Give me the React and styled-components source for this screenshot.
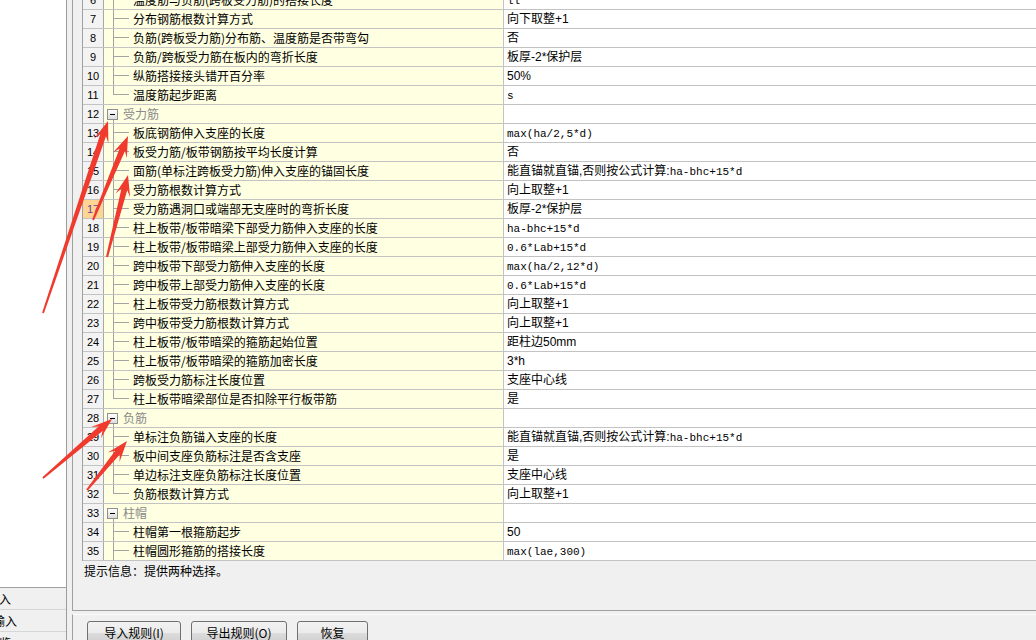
import React from "react";
import styled, { createGlobalStyle } from "styled-components";

const GlobalStyle = createGlobalStyle`
  html, body {
    margin: 0;
    padding: 0;
    background: #f0f0f0;
  }
  body {
    font-family: "Liberation Sans", "Noto Sans CJK SC", sans-serif;
    font-size: 12px;
    color: #000;
  }
`;

const Screen = styled.div`
  position: relative;
  display: flex;
  width: 1036px;
  height: 640px;
  overflow: hidden;
  background: #f0f0f0;
`;

/* left side panel, mostly scrolled out of view */
const LeftPane = styled.div`
  display: flex;
  flex-direction: column;
  width: 67px;
  flex: none;
  box-sizing: border-box;
  border-right: 1px solid #9c9c9c;
`;

const LeftList = styled.div`
  height: 588px;
  flex: none;
  box-sizing: border-box;
  background: #fff;
  border-bottom: 1px solid #a0a0a0;
`;

const LeftItem = styled.div`
  display: flex;
  align-items: center;
  height: 22px;
  flex: none;
  box-sizing: border-box;
  border-bottom: 1px solid #d6d6d6;
  overflow: hidden;
  white-space: nowrap;
  font-family: "Noto Sans CJK SC", sans-serif;
`;

const LeftLabel = styled.span`
  margin-left: ${(p) => p.$shift}px;
`;

const Splitter = styled.div`
  width: 5px;
  flex: none;
`;

const RightPane = styled.div`
  flex: 1;
  min-width: 0;
  display: flex;
  flex-direction: column;
`;

const MainBox = styled.div`
  height: 611px;
  flex: none;
  box-sizing: border-box;
  display: flex;
  flex-direction: column;
  padding-left: 9px;
  border-left: 1px solid #a0a0a0;
  border-bottom: 1px solid #a0a0a0;
`;

const TableViewport = styled.div`
  height: 561px;
  flex: none;
  overflow: hidden;
  border-left: 1px solid #a0a0a0;
`;

const TableBody = styled.div`
  margin-top: -9px;
`;

const Row = styled.div`
  display: flex;
  height: 19px;
  box-sizing: border-box;
  border-bottom: 1px solid #c3c3c3;
`;

const RowHeader = styled.div`
  width: 21px;
  flex: none;
  box-sizing: border-box;
  border-right: 1px solid #a8a8a8;
  background: ${(p) => (p.$active ? "#ffd594" : "#f3f3f3")};
  color: ${(p) => (p.$active ? "#6a3a9e" : "#000")};
  font-family: "Liberation Sans", sans-serif;
  font-size: 11px;
  line-height: 18px;
  text-align: center;
`;

const NameCell = styled.div`
  display: flex;
  width: 400px;
  flex: none;
  box-sizing: border-box;
  border-right: 1px solid #c3c3c3;
  background: #ffffe1;
  white-space: nowrap;
  overflow: hidden;
`;

const NameText = styled.span`
  margin-left: 4px;
  line-height: 18px;
  font-family: "Noto Sans CJK SC", sans-serif;
`;

const GroupText = styled.span`
  line-height: 18px;
  color: #8a8a8a;
  font-family: "Noto Sans CJK SC", sans-serif;
`;

/* tree connector: ├ or └ */
const Branch = styled.div`
  display: grid;
  grid-template-columns: 9px 16px;
  grid-template-rows: 9px 9px;
  width: 25px;
  flex: none;
`;

const BranchTop = styled.div`
  grid-column: 2;
  grid-row: 1;
  border-left: 1px solid #a4a4a4;
  border-bottom: 1px solid #a4a4a4;
`;

const BranchBottom = styled.div`
  grid-column: 2;
  grid-row: 2;
  border-left: ${(p) => (p.$last ? "none" : "1px solid #a4a4a4")};
`;

const GroupGutter = styled.div`
  display: flex;
  flex-direction: column;
  width: 19px;
  flex: none;
  padding-left: 3px;
  box-sizing: border-box;
`;

const ExpandBox = styled.div`
  display: flex;
  align-items: center;
  justify-content: center;
  width: 11px;
  height: 11px;
  margin-top: 4px;
  box-sizing: border-box;
  border: 1px solid #8f8f8f;
  background: linear-gradient(#ffffff, #dcdcdc);
`;

const Minus = styled.span`
  width: 5px;
  height: 1px;
  background: #000;
`;

const Stem = styled.div`
  flex: 1;
  margin-left: 6px;
  border-left: 1px solid #a4a4a4;
`;

const ValueCell = styled.div`
  flex: 1;
  padding-left: 3px;
  line-height: 18px;
  white-space: nowrap;
  background: #fff;
`;

const Code = styled.span`
  font-family: "Liberation Mono", monospace;
  font-size: 11px;
`;

const Hint = styled.div`
  padding: 2px 2px 0;
  line-height: 16px;
  font-family: "Noto Sans CJK SC", sans-serif;
`;

const ButtonBar = styled.div`
  flex: 1;
  display: flex;
  gap: 10px;
  align-items: flex-start;
  margin-top: 3px;
  padding: 6px 0 0 14px;
  border-top: 1px solid #fafafa;
  border-left: 1px solid #a0a0a0;
`;

const Button = styled.button`
  width: ${(p) => p.$w}px;
  height: 23px;
  padding: 0;
  border: 1px solid #707070;
  border-radius: 3px;
  background: linear-gradient(#f2f2f2 0%, #ebebeb 50%, #dddddd 51%, #cfcfcf 100%);
  font-family: "Noto Sans CJK SC", sans-serif;
  font-size: 12px;
  color: #000;
`;

const Overlay = styled.svg`
  position: absolute;
  left: 0;
  top: 0;
  pointer-events: none;
`;

const rows = [
  { n: 6, name: "温度筋与负筋(跨板受力筋)的搭接长度", code: "ll" },
  { n: 7, name: "分布钢筋根数计算方式", value: "向下取整+1" },
  { n: 8, name: "负筋(跨板受力筋)分布筋、温度筋是否带弯勾", value: "否" },
  { n: 9, name: "负筋/跨板受力筋在板内的弯折长度", value: "板厚-2*保护层" },
  { n: 10, name: "纵筋搭接接头错开百分率", value: "50%" },
  { n: 11, name: "温度筋起步距离", code: "s", last: true },
  { n: 12, group: "受力筋" },
  { n: 13, name: "板底钢筋伸入支座的长度", code: "max(ha/2,5*d)" },
  { n: 14, name: "板受力筋/板带钢筋按平均长度计算", value: "否" },
  { n: 15, name: "面筋(单标注跨板受力筋)伸入支座的锚固长度", value: "能直锚就直锚,否则按公式计算:", code: "ha-bhc+15*d" },
  { n: 16, name: "受力筋根数计算方式", value: "向上取整+1" },
  { n: 17, name: "受力筋遇洞口或端部无支座时的弯折长度", value: "板厚-2*保护层", active: true },
  { n: 18, name: "柱上板带/板带暗梁下部受力筋伸入支座的长度", code: "ha-bhc+15*d" },
  { n: 19, name: "柱上板带/板带暗梁上部受力筋伸入支座的长度", code: "0.6*Lab+15*d" },
  { n: 20, name: "跨中板带下部受力筋伸入支座的长度", code: "max(ha/2,12*d)" },
  { n: 21, name: "跨中板带上部受力筋伸入支座的长度", code: "0.6*Lab+15*d" },
  { n: 22, name: "柱上板带受力筋根数计算方式", value: "向上取整+1" },
  { n: 23, name: "跨中板带受力筋根数计算方式", value: "向上取整+1" },
  { n: 24, name: "柱上板带/板带暗梁的箍筋起始位置", value: "距柱边50mm" },
  { n: 25, name: "柱上板带/板带暗梁的箍筋加密长度", value: "3*h" },
  { n: 26, name: "跨板受力筋标注长度位置", value: "支座中心线" },
  { n: 27, name: "柱上板带暗梁部位是否扣除平行板带筋", value: "是", last: true },
  { n: 28, group: "负筋" },
  { n: 29, name: "单标注负筋锚入支座的长度", value: "能直锚就直锚,否则按公式计算:", code: "ha-bhc+15*d" },
  { n: 30, name: "板中间支座负筋标注是否含支座", value: "是" },
  { n: 31, name: "单边标注支座负筋标注长度位置", value: "支座中心线" },
  { n: 32, name: "负筋根数计算方式", value: "向上取整+1", last: true },
  { n: 33, group: "柱帽" },
  { n: 34, name: "柱帽第一根箍筋起步", value: "50" },
  { n: 35, name: "柱帽圆形箍筋的搭接长度", code: "max(lae,300)" },
];

// red annotation arrows: tail -> tip
const arrows = [
  [43, 313, 108, 121],
  [93, 220, 128, 136],
  [107, 257, 128, 175],
  [43, 478, 112, 419],
  [87, 490, 127, 441],
];

function arrowPoints([x1, y1, x2, y2]) {
  const dx = x2 - x1;
  const dy = y2 - y1;
  const len = Math.hypot(dx, dy);
  const ux = dx / len;
  const uy = dy / len;
  const nx = -uy;
  const ny = ux;
  const head = 21;
  const neck = 15;
  const pt = (d, w) => `${(x2 - ux * d + nx * w).toFixed(1)},${(y2 - uy * d + ny * w).toFixed(1)}`;
  return [
    pt(len, 1),
    pt(neck, 3),
    pt(head, 7.5),
    pt(0, 0),
    pt(head, -7.5),
    pt(neck, -3),
    pt(len, -1),
  ].join(" ");
}

const TableRow = ({ row }) => (
  <Row>
    <RowHeader $active={row.active}>{row.n}</RowHeader>
    <NameCell>
      {row.group ? (
        <>
          <GroupGutter>
            <ExpandBox>
              <Minus />
            </ExpandBox>
            <Stem />
          </GroupGutter>
          <GroupText>{row.group}</GroupText>
        </>
      ) : (
        <>
          <Branch>
            <BranchTop />
            <BranchBottom $last={row.last} />
          </Branch>
          <NameText>{row.name}</NameText>
        </>
      )}
    </NameCell>
    <ValueCell>
      {row.value}
      {row.code && <Code>{row.code}</Code>}
    </ValueCell>
  </Row>
);

const App = () => (
  <Screen>
    <GlobalStyle />
    <LeftPane>
      <LeftList />
      <LeftItem>
        <LeftLabel $shift={-13}>导入</LeftLabel>
      </LeftItem>
      <LeftItem>
        <LeftLabel $shift={-31}>手动输入</LeftLabel>
      </LeftItem>
      <LeftItem>
        <LeftLabel $shift={-13}>预览</LeftLabel>
      </LeftItem>
    </LeftPane>
    <Splitter />
    <RightPane>
      <MainBox>
        <TableViewport>
          <TableBody>
            {rows.map((r) => (
              <TableRow key={r.n} row={r} />
            ))}
          </TableBody>
        </TableViewport>
        <Hint>提示信息：提供两种选择。</Hint>
      </MainBox>
      <ButtonBar>
        <Button $w={94}>导入规则(I)</Button>
        <Button $w={96}>导出规则(O)</Button>
        <Button $w={71}>恢复</Button>
      </ButtonBar>
    </RightPane>
    <Overlay width="1036" height="640" viewBox="0 0 1036 640">
      {arrows.map((a, i) => (
        <polygon key={i} points={arrowPoints(a)} fill="#f03a2e" />
      ))}
    </Overlay>
  </Screen>
);

export default App;
